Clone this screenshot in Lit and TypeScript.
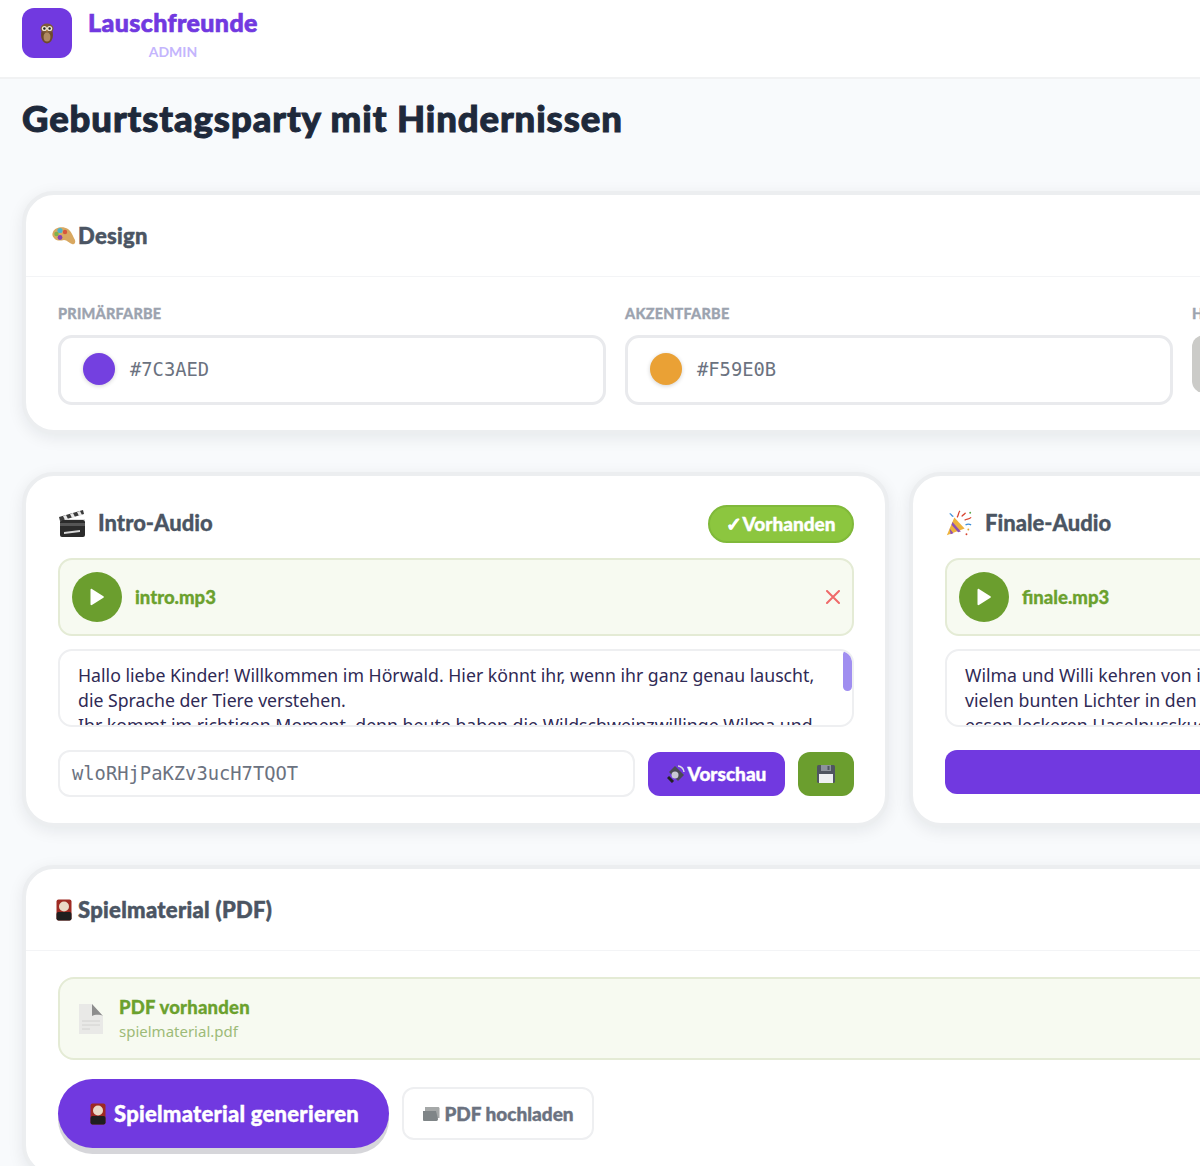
import {LitElement, html, css, svg} from 'lit';
import {customElement} from 'lit/decorators.js';

const owl = svg`<svg width="20" height="24" viewBox="0 0 20 24"><ellipse cx="10" cy="14" rx="6" ry="8.5" fill="#6d4a2c"/><ellipse cx="10" cy="7.5" rx="6.5" ry="5" fill="#7d5a3a"/><circle cx="7.4" cy="7.5" r="2.6" fill="#efe6d4"/><circle cx="12.6" cy="7.5" r="2.6" fill="#efe6d4"/><circle cx="7.4" cy="7.5" r="1.2" fill="#222"/><circle cx="12.6" cy="7.5" r="1.2" fill="#222"/><path d="M9.2 9.4h1.6L10 11z" fill="#d9972f"/><ellipse cx="10" cy="16" rx="3.4" ry="4.5" fill="#b08b62"/></svg>`;
const palette = svg`<svg width="24" height="20" viewBox="0 0 24 20"><path d="M1 6C3 1 11 0 16 3c3 2 5 7 7 11 1 3-1 5-3 4-3-1-5-4-8-4-4 1-8 1-10-2C0 10 0 8 1 6z" fill="#d9a860"/><circle cx="8" cy="4.500" r="2.600" fill="#4fb3c8"/><circle cx="4.500" cy="8" r="2.200" fill="#7fb24a"/><circle cx="8" cy="11.500" r="2.400" fill="#8a3fb0"/><circle cx="13" cy="6" r="2.200" fill="#d8573c"/></svg>`;
const clapper = svg`<svg width="28" height="30" viewBox="0 0 28 30"><rect x="2" y="12" width="25" height="17" rx="2" fill="#2b2b2b"/><rect x="2" y="15" width="25" height="3" fill="#555"/><path d="M2 12h25v-1H2z" fill="#ddd"/><path d="M1 9L25 2l1 4L2 13z" fill="#3a3a3a"/><path d="M5 8l3-1 2 4-3 1zM12 6l3-1 2 4-3 1zM19 4l3-1 2 4-3 1z" fill="#e8e8e8"/><path d="M6 24l16-2v2L6 26z" fill="#d8d8d8"/></svg>`;
const popper = svg`<svg width="28" height="30" viewBox="0 0 30 30"><path d="M2 28L10 9l11 12z" fill="#eeb23c"/><path d="M5 21l4 5-3 1zM8 14l9 10-3 1-7-8z" fill="#8c4fb5"/><path d="M13 9c2-3 1-5 3-7M21 12c3-2 4 0 7-3M18 8c1-2 3-2 4-4" stroke="#d8432f" stroke-width="1.4" fill="none"/><path d="M5 5c2 0 2 3 4 3M22 17c2-1 4-1 6 0" stroke="#3f8fd8" stroke-width="1.4" fill="none"/><circle cx="25" cy="22" r="1" fill="#e6a936"/><circle cx="23" cy="27" r="1" fill="#d8432f"/><circle cx="27" cy="4" r="1" fill="#5aa64a"/></svg>`;
const mahjong = svg`<svg width="16" height="22" viewBox="0 0 16 22"><rect x=".5" y=".5" width="15" height="21" rx="2" fill="#9e2a22"/><rect x=".5" y="13" width="15" height="8.5" rx="2" fill="#1f1f1f"/><circle cx="8" cy="7.5" r="5" fill="#ead9c6"/></svg>`;
const page = svg`<svg width="26" height="32" viewBox="0 0 26 32"><path d="M1 1h13l11 12v18H1z" fill="#e9e9e7"/><path d="M14 1l11 12c-4-2-9-1-11 0z" fill="#8d8d8d"/><path d="M4 18h18M4 22h18M4 26h8" stroke="#d2d2d0" stroke-width="1"/></svg>`;
const folder = svg`<svg width="18" height="16" viewBox="0 0 18 16"><path d="M3 1h13c1 0 1.500.6 1.500 1.500V12H3z" fill="#a5a8a8"/><path d="M1 5h13l2 8c0 1-.6 2-1.500 2H2c-.8 0-1-.6-1-1.500z" fill="#7f8587"/></svg>`;
const speaker = svg`<svg width="19" height="19" viewBox="0 0 19 19"><path d="M2 8l6-6 9 9-6 6z" fill="#4a4a55"/><circle cx="8" cy="11" r="3.500" fill="#c9c9d4"/><path d="M11 2c3 0 6 3 6 6" stroke="#d8d8e2" stroke-width="1.500" fill="none"/><path d="M1 13l5 5" stroke="#222" stroke-width="3"/></svg>`;
const floppy = svg`<svg width="20" height="20" viewBox="0 0 20 20"><rect x="1" y="1" width="18" height="18" rx="1.500" fill="#4f5560"/><rect x="5" y="1" width="10" height="6" fill="#8d939c"/><rect x="11.500" y="2" width="2" height="4" fill="#4f5560"/><rect x="3" y="10" width="14" height="9" fill="#eef0f2"/></svg>`;
const play = svg`<svg width="16" height="18" viewBox="0 0 16 18"><path d="M1.500 1.800c0-.8.8-1.200 1.400-.8l11.500 7.200c.6.400.6 1.200 0 1.600L2.900 17c-.6.400-1.400 0-1.400-.8z" fill="#fff"/></svg>`;
const cross = svg`<svg width="14" height="14" viewBox="0 0 14 14"><path d="M1 1l12 12M13 1L1 13" stroke="#ef6a6a" stroke-width="2" stroke-linecap="round"/></svg>`;

const intro = [
    'Hallo liebe Kinder! Willkommen im Hörwald. Hier könnt ihr, wenn ihr ganz genau lauscht,',
    'die Sprache der Tiere verstehen.',
    'Ihr kommt im richtigen Moment, denn heute haben die Wildschweinzwillinge Wilma und',
];

const finale = [
    'Wilma und Willi kehren von ihrer Reise zurück und bestaunen die',
    'vielen bunten Lichter in den Bäumen. Alle Tiere tanzen, lachen und',
    'essen leckeren Haselnusskuchen bis tief in die Nacht hinein.',
];

@customElement('app-root')
export class AppRoot extends LitElement {

    static override styles = css`
        :host {
            display: block;
            width: 1200px;
            height: 1166px;
            overflow: hidden;
            background: #f8fafc;
            font-family: "Lato", sans-serif;
        }

        header {
            display: flex;
            gap: 16px;
            height: 79px;
            padding: 8px 22px 0;
            box-sizing: border-box;
            background: #fff;
            border-bottom: 2px solid #f1f2f3;
        }

        .logo {
            display: flex;
            align-items: center;
            justify-content: center;
            width: 50px;
            height: 50px;
            border-radius: 12px;
            background: #7139e0;
        }

        .brand {
            display: flex;
            flex-direction: column;
            align-items: center;
            margin-top: -1px;
        }

        .brand b {
            font-size: 25px;
            line-height: 30px;
            font-weight: 900;
            letter-spacing: 0.4px;
            color: #7139e0;
            -webkit-text-stroke: 0.7px #7139e0;
        }

        .brand small {
            margin-top: 6px;
            font-size: 14px;
            line-height: 17px;
            font-weight: 700;
            color: #c4b5fd;
        }

        main {
            width: 1796px;
            padding: 0 22px;
        }

        h1 {
            margin: 0;
            padding: 17px 0 51px;
            font-size: 36.5px;
            line-height: 44px;
            font-weight: 900;
            letter-spacing: 0.9px;
            color: #1e293b;
            -webkit-text-stroke: 1px #1e293b;
        }

        .card {
            background: #fff;
            border: 4px solid #eceef0;
            border-radius: 32px;
            box-shadow: 0 4px 16px rgba(15, 23, 42, 0.08);
        }

        .stack {
            display: flex;
            flex-direction: column;
            gap: 38px;
        }

        .card-head {
            display: flex;
            align-items: center;
            gap: 2px;
            height: 81px;
            padding-left: 26px;
            border-bottom: 1px solid #f3f4f6;
            font-size: 22px;
            font-weight: 900;
            letter-spacing: 0.3px;
            color: #4b5563;
            -webkit-text-stroke: 0.5px #4b5563;
        }

        .emoji {
            display: flex;
            justify-content: center;
            width: 24px;
        }

        .card-body {
            padding: 28px 32px 25px;
        }

        .pdf-body {
            padding-top: 26px;
        }

        .colors {
            display: grid;
            grid-template-columns: repeat(3, 548px);
            gap: 19px;
        }

        label {
            display: block;
            margin-bottom: 13px;
            font-size: 14.5px;
            line-height: 17px;
            font-weight: 900;
            letter-spacing: 0.2px;
            color: #9ca3af;
            -webkit-text-stroke: 0.3px #9ca3af;
        }

        .field {
            display: flex;
            align-items: center;
            gap: 15px;
            height: 70px;
            padding: 0 0 2px 22px;
            box-sizing: border-box;
            border: 3px solid #e9eaed;
            border-radius: 14px;
            font: 18.8px "DejaVu Sans Mono", monospace;
            color: #6b7280;
        }

        .swatch {
            width: 32px;
            height: 32px;
            border-radius: 50%;
            box-shadow: 0 1px 4px rgba(0, 0, 0, 0.18);
        }

        .thumb {
            height: 58px;
            border-radius: 12px;
            background: #cbcbc8;
        }

        .audio {
            display: grid;
            grid-template-columns: 867px 867px;
            gap: 20px;
        }

        .audio .card {
            display: flex;
            flex-direction: column;
            padding: 29px 31px 26px 32px;
        }

        .audio-head {
            display: flex;
            align-items: center;
            justify-content: space-between;
            height: 38px;
            margin-bottom: 15px;
        }

        .audio-title {
            display: flex;
            align-items: center;
            gap: 12px;
            margin-bottom: 3px;
            font-size: 22px;
            font-weight: 900;
            color: #4b5563;
            -webkit-text-stroke: 0.3px #4b5563;
        }

        .badge {
            display: flex;
            align-items: center;
            justify-content: center;
            width: 146px;
            height: 38px;
            padding-bottom: 2px;
            box-sizing: border-box;
            border: 2px solid #80b93a;
            border-radius: 19px;
            background: #8cc63f;
            font-size: 19px;
            font-weight: 900;
            color: #fff;
            -webkit-text-stroke: 0.4px #fff;
        }

        .file {
            display: flex;
            align-items: center;
            gap: 13px;
            height: 78px;
            padding: 0 12px;
            box-sizing: border-box;
            border: 2px solid #e4ebd5;
            border-radius: 14px;
            background: #f7faf1;
            font-size: 18.5px;
            font-weight: 900;
            color: #6ba12e;
            -webkit-text-stroke: 0.3px #6ba12e;
        }

        .play {
            display: flex;
            align-items: center;
            justify-content: center;
            width: 50px;
            height: 50px;
            border-radius: 50%;
            background: #6b9e2e;
        }

        .cross {
            display: flex;
            margin-left: auto;
        }

        .script {
            position: relative;
            height: 78px;
            margin: 13px 0 23px;
            padding: 12px 18px 0;
            box-sizing: border-box;
            overflow: hidden;
            border: 2px solid #eeeff1;
            border-radius: 14px;
            font-family: "Noto Sans", sans-serif;
            font-size: 17.7px;
            line-height: 25px;
            color: #2f2a55;
        }

        .script div {
            white-space: nowrap;
        }

        .thumbbar {
            position: absolute;
            top: -1px;
            right: 0;
            width: 9px;
            height: 41px;
            border-radius: 5px;
            background: #a08ef0;
        }

        .controls {
            display: flex;
            align-items: center;
            gap: 13px;
            height: 47px;
        }

        .code {
            flex: 1;
            display: flex;
            align-items: center;
            height: 47px;
            padding-left: 12px;
            box-sizing: border-box;
            border: 2px solid #eeeff1;
            border-radius: 12px;
            font: 18.8px "DejaVu Sans Mono", monospace;
            color: #6b7280;
        }

        .btn {
            display: flex;
            align-items: center;
            justify-content: center;
            gap: 2px;
            height: 44px;
            border-radius: 12px;
            font-size: 19px;
            font-weight: 900;
            color: #fff;
            -webkit-text-stroke: 0.4px #fff;
        }

        .preview {
            width: 137px;
            background: #7139e0;
        }

        .save {
            width: 56px;
            background: #6b9e2e;
        }

        .wide {
            flex: 1;
            align-self: flex-start;
            background: #7139e0;
        }

        .pdf {
            display: flex;
            align-items: center;
            gap: 15px;
            height: 83px;
            padding-left: 18px;
            box-sizing: border-box;
            border: 2px solid #e4ebd5;
            border-radius: 16px;
            background: #f7faf1;
        }

        .pdf-text {
            padding-bottom: 2px;
        }

        .pdf b {
            display: block;
            padding-bottom: 2px;
            font-size: 18.5px;
            line-height: 24px;
            font-weight: 900;
            letter-spacing: 0.2px;
            color: #6ba12e;
            -webkit-text-stroke: 0.3px #6ba12e;
        }

        .pdf span {
            display: block;
            font-family: "Noto Sans", sans-serif;
            font-size: 15px;
            line-height: 20px;
            color: #9dbb78;
        }

        .actions {
            display: flex;
            align-items: center;
            gap: 13px;
            margin-top: 19px;
        }

        .generate {
            display: flex;
            align-items: center;
            justify-content: center;
            gap: 8px;
            width: 331px;
            height: 69px;
            padding-left: 2px;
            box-sizing: border-box;
            border-radius: 35px;
            background: #7139e0;
            box-shadow: 0 6px 0 #d6d6da;
            font-size: 22px;
            font-weight: 900;
            letter-spacing: 0.25px;
            color: #fff;
            -webkit-text-stroke: 0.4px #fff;
        }

        .upload {
            display: flex;
            align-items: center;
            justify-content: center;
            gap: 4px;
            width: 192px;
            height: 53px;
            box-sizing: border-box;
            border: 2px solid #eeeff1;
            border-radius: 12px;
            font-size: 19px;
            font-weight: 900;
            color: #6b7280;
            -webkit-text-stroke: 0.4px #6b7280;
        }
    `;

    private renderColor(name: string, value: string, shown: string) {
        return html`
            <div>
                <label>${name}</label>
                <div class="field">
                    <div class="swatch" style="background: ${shown}"></div>
                    ${value}
                </div>
            </div>
        `;
    }

    private renderScript(lines: string[], scrollbar: boolean) {
        return html`
            <div class="script">
                ${lines.map((line) => html`<div>${line}</div>`)}
                ${scrollbar ? html`<div class="thumbbar"></div>` : ''}
            </div>
        `;
    }

    override render() {
        return html`
            <header>
                <div class="logo">${owl}</div>
                <div class="brand">
                    <b>Lauschfreunde</b>
                    <small>ADMIN</small>
                </div>
            </header>
            <main>
                <h1>Geburtstagsparty mit Hindernissen</h1>
                <div class="stack">
                    <section class="card">
                        <div class="card-head"><span class="emoji">${palette}</span> Design</div>
                        <div class="card-body">
                            <div class="colors">
                                ${this.renderColor('PRIMÄRFARBE', '#7C3AED', '#7440e0')}
                                ${this.renderColor('AKZENTFARBE', '#F59E0B', '#eaa135')}
                                <div>
                                    <label>HINTERGRUND</label>
                                    <div class="thumb"></div>
                                </div>
                            </div>
                        </div>
                    </section>

                    <div class="audio">
                        <section class="card">
                            <div class="audio-head">
                                <div class="audio-title">${clapper} Intro-Audio</div>
                                <div class="badge">✓Vorhanden</div>
                            </div>
                            <div class="file">
                                <div class="play">${play}</div>
                                intro.mp3
                                <span class="cross">${cross}</span>
                            </div>
                            ${this.renderScript(intro, true)}
                            <div class="controls">
                                <div class="code">wloRHjPaKZv3ucH7TQOT</div>
                                <div class="btn preview">${speaker}Vorschau</div>
                                <div class="btn save">${floppy}</div>
                            </div>
                        </section>
                        <section class="card">
                            <div class="audio-head">
                                <div class="audio-title">${popper} Finale-Audio</div>
                                <div class="badge">✓Vorhanden</div>
                            </div>
                            <div class="file">
                                <div class="play">${play}</div>
                                finale.mp3
                                <span class="cross">${cross}</span>
                            </div>
                            ${this.renderScript(finale, false)}
                            <div class="controls">
                                <div class="btn wide">Audio generieren</div>
                            </div>
                        </section>
                    </div>

                    <section class="card">
                        <div class="card-head"><span class="emoji">${mahjong}</span> Spielmaterial (PDF)</div>
                        <div class="card-body pdf-body">
                            <div class="pdf">
                                ${page}
                                <div class="pdf-text">
                                    <b>PDF vorhanden</b>
                                    <span>spielmaterial.pdf</span>
                                </div>
                            </div>
                            <div class="actions">
                                <div class="generate">${mahjong} Spielmaterial generieren</div>
                                <div class="upload">${folder} PDF hochladen</div>
                            </div>
                        </div>
                    </section>
                </div>
            </main>
        `;
    }
}
